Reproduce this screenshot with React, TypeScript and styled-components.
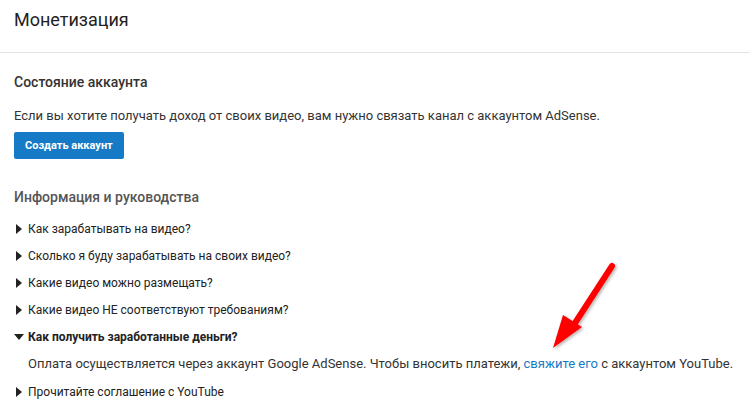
import React, { useState } from 'react';
import styled, { createGlobalStyle } from 'styled-components';

const GlobalStyle = createGlobalStyle`
    html, body {
        margin: 0;
        padding: 0;
        background: #fff;
    }
    body {
        font-family: Roboto, "Noto Sans", Arial, sans-serif;
        color: #333;
    }
`

const StyledPage = styled.div`
    position: relative;
    width: 750px;
    height: 414px;
    overflow: hidden;
    background: #fff;
`

const StyledHeader = styled.div`
    height: 52px;
    border-bottom: 1px solid #e2e2e2;
    padding: 0 14px;
    display: flex;
    align-items: center;
`

const StyledTitle = styled.h1`
    margin: 0 0 13px;
    font-size: 18px;
    font-weight: 400;
    color: #222;
`

const StyledBody = styled.div`
    padding: 16px 14px 0;
`

const StyledSectionTitle = styled.h2<{ $muted?: boolean }>`
    margin: 0;
    font-size: 14px;
    line-height: 26px;
    font-weight: 500;
    color: ${props => props.$muted ? '#555' : '#333'};
`

const StyledText = styled.p`
    margin: 8px 0 3px;
    font-size: 13px;
    line-height: 26px;
    color: #333;
`

const StyledButton = styled.button`
    height: 27px;
    padding: 0 11px;
    border: none;
    border-radius: 2px;
    background: #167ac6;
    color: #fff;
    font-family: inherit;
    font-size: 11px;
    font-weight: 700;
    cursor: pointer;
`

const StyledInfo = styled.div`
    margin-top: 25px;
`

const StyledList = styled.ul`
    list-style: none;
    margin: 5px 0 0;
    padding: 0;
`

const StyledItem = styled.li`
    font-size: 12px;
`

const StyledToggle = styled.div<{ $open: boolean }>`
    display: flex;
    align-items: center;
    height: 27px;
    cursor: pointer;
    font-weight: ${props => props.$open ? 700 : 400};
    color: #222;
`

const StyledCaret = styled.span<{ $open: boolean }>`
    width: 0;
    height: 0;
    margin: 0 7px 0 2px;
    ${props => props.$open ? `
        border-left: 5px solid transparent;
        border-right: 5px solid transparent;
        border-top: 6px solid #222;
        margin-left: 0;
        margin-right: 4px;
    ` : `
        border-top: 5px solid transparent;
        border-bottom: 5px solid transparent;
        border-left: 6px solid #222;
        margin-right: 6px;
    `}
`

const StyledAnswer = styled.div`
    padding-left: 14px;
    height: 28px;
    line-height: 28px;
    font-size: 13px;
    color: #333;
`

const StyledLink = styled.a`
    color: #167ac6;
    text-decoration: none;
`

const StyledArrow = styled.svg`
    position: absolute;
    left: 540px;
    top: 255px;
    pointer-events: none;
`

type Question = {
    title: string;
    answer?: React.ReactNode;
}

const questions: Question[] = [
    { title: 'Как зарабатывать на видео?' },
    { title: 'Сколько я буду зарабатывать на своих видео?' },
    { title: 'Какие видео можно размещать?' },
    { title: 'Какие видео НЕ соответствуют требованиям?' },
    {
        title: 'Как получить заработанные деньги?',
        answer: (
            <>
                Оплата осуществляется через аккаунт Google AdSense. Чтобы вносить платежи,{' '}
                <StyledLink href="#">свяжите его</StyledLink> с аккаунтом YouTube.
            </>
        ),
    },
    { title: 'Прочитайте соглашение с YouTube' },
]

const Arrow = () => (
    <StyledArrow width="100" height="100" viewBox="0 0 100 100">
        <defs>
            <filter id="arrowShadow" x="-20%" y="-20%" width="140%" height="140%">
                <feDropShadow dx="1.5" dy="1.5" stdDeviation="1.5" floodColor="#000" floodOpacity="0.3" />
            </filter>
        </defs>
        <g filter="url(#arrowShadow)">
            <line x1="72" y1="11" x2="35" y2="68" stroke="#f00" strokeWidth="6" strokeLinecap="round" />
            <polygon points="13,93 23,60 42,72" fill="#f00" />
        </g>
    </StyledArrow>
)

const App = () => {
    const [openIndex, setOpenIndex] = useState<number>(4)

    return (
        <StyledPage>
            <GlobalStyle />
            <StyledHeader>
                <StyledTitle>Монетизация</StyledTitle>
            </StyledHeader>
            <StyledBody>
                <StyledSectionTitle>Состояние аккаунта</StyledSectionTitle>
                <StyledText>
                    Если вы хотите получать доход от своих видео, вам нужно связать канал с аккаунтом AdSense.
                </StyledText>
                <StyledButton>Создать аккаунт</StyledButton>
                <StyledInfo>
                    <StyledSectionTitle $muted>Информация и руководства</StyledSectionTitle>
                    <StyledList>
                        {questions.map((q, i) => {
                            const open = openIndex === i
                            return (
                                <StyledItem key={i}>
                                    <StyledToggle $open={open} onClick={() => setOpenIndex(open ? -1 : i)}>
                                        <StyledCaret $open={open} />
                                        {q.title}
                                    </StyledToggle>
                                    {open && q.answer && <StyledAnswer>{q.answer}</StyledAnswer>}
                                </StyledItem>
                            )
                        })}
                    </StyledList>
                </StyledInfo>
            </StyledBody>
            <Arrow />
        </StyledPage>
    );
};

export default App;
